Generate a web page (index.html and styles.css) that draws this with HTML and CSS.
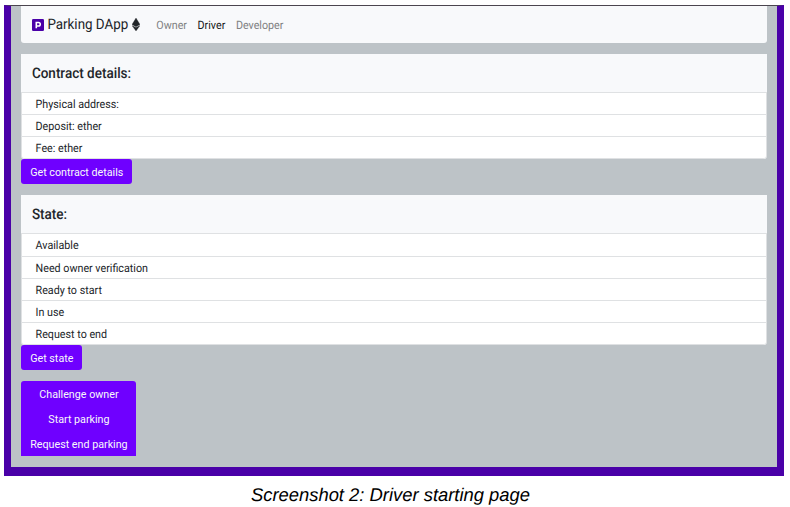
FILE: index.html
```html
<!DOCTYPE html>
<html lang="en">
<head>
<meta charset="utf-8">
<title>Parking DApp</title>
<link rel="stylesheet" href="styles.css">
</head>
<body>
<figure class="figure">
  <div class="app">
    <nav class="navbar">
      <svg class="parking" viewBox="0 0 12 12"><rect width="12" height="12" rx="1.2" fill="#4a00a8"/><path d="M4.3 9.2V3.5h2.2a1.75 1.75 0 0 1 0 3.5H4.3" fill="none" stroke="#fff" stroke-width="1.6"/></svg>
      <span class="brand label">Parking DApp</span>
      <svg class="ether" viewBox="0 0 8 13"><path d="M4 0 8 6.5 4 8.7 0 6.5ZM0 7.6 4 9.6 8 7.6 4 13Z" fill="#212529" stroke="#212529" stroke-width=".3"/></svg>
      <a class="link label first">Owner</a>
      <a class="link label active">Driver</a>
      <a class="link label">Developer</a>
    </nav>
    <section class="card">
      <h2 class="card-title"><span class="label">Contract details:</span></h2>
      <ul class="list">
        <li><span class="label">Physical address:</span></li>
        <li><span class="label">Deposit: ether</span></li>
        <li><span class="label">Fee: ether</span></li>
      </ul>
    </section>
    <button class="btn"><span class="label">Get contract details</span></button>
    <section class="card">
      <h2 class="card-title"><span class="label">State:</span></h2>
      <ul class="list">
        <li><span class="label">Available</span></li>
        <li><span class="label">Need owner verification</span></li>
        <li><span class="label">Ready to start</span></li>
        <li><span class="label">In use</span></li>
        <li><span class="label">Request to end</span></li>
      </ul>
    </section>
    <button class="btn"><span class="label">Get state</span></button>
    <div class="btn-group">
      <button class="btn"><span class="label">Challenge owner</span></button>
      <button class="btn"><span class="label">Start parking</span></button>
      <button class="btn"><span class="label">Request end parking</span></button>
    </div>
  </div>
  <figcaption class="caption">Screenshot 2: Driver starting page</figcaption>
</figure>
</body>
</html>
```
FILE: styles.css
```css
* { box-sizing: border-box; }
body { margin: 0; background: #fff; overflow: hidden; }
.figure { margin: 5px 6px 0 4px; }
.app {
  height: 471px;
  padding: 0 10px 0 10.4px;
  border: solid #4a00a8;
  border-width: 1px 7px 9px 7px;
  border-top-color: #4b454f;
  background: #bdc3c7;
  font: 10.72px/16px Roboto, sans-serif;
  text-rendering: geometricPrecision;
  color: #212529;
  display: flex;
  flex-direction: column;
  align-items: flex-start;
}
/* slightly condensed lettering: taller glyphs at unchanged widths */
.label { display: inline-block; transform: translateY(.5px) scaleY(1.08); }
.navbar {
  width: 100%;
  height: 37px;
  padding: 0 10.5px;
  display: flex;
  align-items: center;
  background: #f8f9fb;
  border-radius: 0 0 3px 3px;
}
.parking { width: 12px; height: 12px; margin-right: 3.5px; }
.brand { font-size: 13.4px; }
.ether { width: 8px; height: 13px; margin-left: 4px; }
.link { margin-left: 10.6px; color: #808182; }
.link.first { margin-left: 16px; }
.link.active { color: #18191a; }
.card { width: 100%; margin-top: 11px; }
.card-title {
  margin: 0;
  height: 39px;
  padding: 0 0 0 10.5px;
  background: #f8f9fb;
  border-bottom: 1px solid #dfe1e3;
  font-size: 13.5px;
  line-height: 38px;
  font-weight: 500;
}
.list {
  margin: 0;
  padding: 0;
  list-style: none;
  background: #fff;
  border: solid #dfe1e3;
  border-width: 0 1px;
  border-radius: 0 0 3px 3px;
}
.list li { height: 22.1px; padding-left: 13.2px; line-height: 22px; border-bottom: 1px solid #dfe1e3; }
.list li:last-child { border-radius: 0 0 3px 3px; }
.btn {
  height: 25.2px;
  padding: 1px 8.8px 0;
  border: 0;
  border-radius: 3px;
  background: #6f00ff;
  color: #f8f9fa;
  font: inherit;
  text-align: center;
}
.btn-group { margin-top: 11px; display: flex; flex-direction: column; }
.btn-group .btn { height: 24.9px; border-radius: 0; }
.btn-group .btn:first-child { border-radius: 3px 3px 0 0; }
.caption {
  margin-top: 8px;
  padding-right: 7px;
  text-align: center;
  font: italic 18.4px/22px "Liberation Sans", sans-serif;
  text-rendering: geometricPrecision;
  color: #000;
}
```
